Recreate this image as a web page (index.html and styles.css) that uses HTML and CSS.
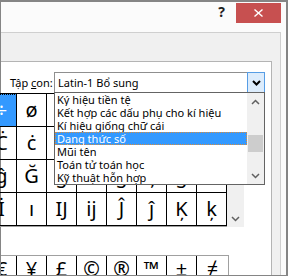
FILE: index.html
```html
<!DOCTYPE html>
<html>
<head>
    <link rel="stylesheet" href="styles.css">
</head>
<body>
    <div class="dialog">
        <div class="titlebar">
            <span class="help">?</span>
            <div class="close">
                <svg width="9" height="8" viewBox="0 0 9 8"><path d="M0.5 0.5 L8.5 7.5 M8.5 0.5 L0.5 7.5" stroke="#fff" stroke-width="1.4" fill="none"/></svg>
            </div>
        </div>
        <div class="tabpage">
            <div class="panel">
                <div class="subset-row">
                    <span class="label">Tập <u>c</u>on:</span>
                    <div class="combo">
                        <span class="combo-text">Latin-1 Bổ sung</span>
                        <span class="combo-btn">
                            <svg width="9" height="6" viewBox="0 0 9 6"><path d="M1 1 L4.5 4.5 L8 1" stroke="#000" stroke-width="2" fill="none"/></svg>
                        </span>
                        <div class="dropdown">
                            <ul class="items">
                                <li>Ký hiệu tiền tệ</li>
                                <li>Kết hợp các dấu phụ cho kí hiệu</li>
                                <li>Kí hiệu giống chữ cái</li>
                                <li class="active">Dạng thức số</li>
                                <li>Mũi tên</li>
                                <li>Toán tử toán học</li>
                                <li>Kỹ thuật hỗn hợp</li>
                            </ul>
                            <div class="list-scroll">
                                <span class="arrow"><svg width="9" height="6" viewBox="0 0 9 6"><path d="M1 5 L4.5 1.5 L8 5" stroke="#606060" stroke-width="1.5" fill="none"/></svg></span>
                                <span class="track"><span class="thumb"></span></span>
                                <span class="arrow"><svg width="9" height="6" viewBox="0 0 9 6"><path d="M1 1 L4.5 4.5 L8 1" stroke="#606060" stroke-width="1.5" fill="none"/></svg></span>
                            </div>
                        </div>
                    </div>
                </div>
                <div class="grid-wrap">
                    <div class="grid">
                        <span class="cell selected">÷</span><span class="cell">ø</span><span class="cell">ù</span><span class="cell">ú</span><span class="cell">û</span><span class="cell">ü</span><span class="cell">ý</span><span class="cell">þ</span>
                        <span class="cell">Ċ</span><span class="cell">ċ</span><span class="cell">Č</span><span class="cell">č</span><span class="cell">Ď</span><span class="cell">ď</span><span class="cell">Đ</span><span class="cell">đ</span>
                        <span class="cell">ĝ</span><span class="cell">Ğ</span><span class="cell">ğ</span><span class="cell">Ġ</span><span class="cell">ġ</span><span class="cell">Ģ</span><span class="cell">ģ</span><span class="cell">Ĥ</span>
                        <span class="cell">İ</span><span class="cell">ı</span><span class="cell">Ĳ</span><span class="cell">ĳ</span><span class="cell">Ĵ</span><span class="cell">ĵ</span><span class="cell">Ķ</span><span class="cell">ķ</span>
                    </div>
                    <div class="grid-scroll">
                        <span class="arrow"><svg width="9" height="6" viewBox="0 0 9 6"><path d="M1 1 L4.5 4.5 L8 1" stroke="#606060" stroke-width="1.5" fill="none"/></svg></span>
                    </div>
                </div>
                <div class="recent">
                    <span class="cell">€</span><span class="cell">¥</span><span class="cell">£</span><span class="cell">©</span><span class="cell">®</span><span class="cell">™</span><span class="cell">±</span><span class="cell">≠</span>
                </div>
            </div>
        </div>
    </div>
</body>
</html>
```

FILE: styles.css
```css
body {
    margin: 0;
    font-family: "Noto Sans", "Open Sans", sans-serif;
    font-size: 11px;
    color: #000;
}
.dialog {
    position: relative;
    width: 288px;
    height: 276px;
    overflow: hidden;
    background: #fbfbfb;
}
/* window frame, painted over everything except the symbol grid */
.dialog::after {
    content: "";
    position: absolute;
    inset: 0;
    border-style: solid;
    border-color: #858585;
    border-width: 2px 2px 1px 1px;
    z-index: 2;
    pointer-events: none;
}
.titlebar {
    height: 32px;
    display: flex;
    justify-content: flex-end;
    align-items: flex-start;
    gap: 11px;
    padding-right: 7px;
}
.help {
    margin-top: 4px;
    font-size: 14px;
    line-height: 16px;
    font-weight: 700;
    color: #1e1e1e;
}
.close {
    margin-top: 3px;
    width: 45px;
    height: 20px;
    background: #c75050;
    display: flex;
    align-items: center;
    justify-content: center;
}
.tabpage {
    width: 280px;
    height: 243px;
    border-top: 1px solid #cfcfcf;
    border-right: 1px solid #cfcfcf;
    background: #f0f0f0;
    padding-top: 28px;
    box-sizing: content-box;
}
.panel {
    width: 271px;
    height: 214px;
    border-top: 1px solid #b4b4b4;
    border-right: 1px solid #b4b4b4;
    background: #fff;
    padding-top: 10px;
}
.subset-row {
    display: flex;
    align-items: center;
    height: 21px;
}
.label {
    width: 44px;
    margin-left: 10px;
    white-space: nowrap;
}
.combo {
    position: relative;
    z-index: 4;
    width: 209px;
    height: 19px;
    border: 1px solid #8f8f8f;
    display: flex;
    align-items: center;
}
.combo-text {
    flex: 1;
    padding-left: 3px;
    white-space: nowrap;
}
.combo-btn {
    align-self: stretch;
    width: 16px;
    margin: -1px -1px -1px 0;
    border: 1px solid #569de5;
    background: #dcecfc;
    display: flex;
    align-items: center;
    justify-content: center;
}
.dropdown {
    position: absolute;
    top: 19px;
    left: -1px;
    width: 209px;
    height: 91px;
    border: 1px solid #646464;
    background: #fff;
    display: flex;
}
.items {
    list-style: none;
    margin: 0;
    padding: 0;
    width: 192px;
    overflow: hidden;
}
.items li {
    height: 13px;
    line-height: 13px;
    padding-left: 2px;
    white-space: nowrap;
    overflow: hidden;
}
.items li.active {
    background: #3399ff;
    color: #fff;
    outline: 1px dotted #d98c3c;
    outline-offset: -1px;
}
.list-scroll {
    width: 17px;
    background: #f0f0f0;
    display: flex;
    flex-direction: column;
}
.arrow {
    height: 17px;
    display: flex;
    align-items: center;
    justify-content: center;
}
.track {
    flex: 1;
    padding-top: 25px;
}
.thumb {
    display: block;
    width: 15px;
    height: 17px;
    margin-left: 1px;
    background: #cdcdcd;
}
.grid-wrap {
    position: relative;
    z-index: 3;
    display: flex;
    margin-left: -13px;
}
.grid {
    display: grid;
    grid-template-columns: repeat(8, 30px);
    grid-auto-rows: 33px;
    border-top: 1px solid #000;
    border-bottom: 1px solid #a0a0a0;
}
.cell {
    box-sizing: border-box;
    border-right: 1px solid #000;
    border-bottom: 1px solid #000;
    text-align: center;
    font-size: 20px;
    line-height: 31px;
}
.cell.selected {
    background: #3399ff;
    color: #fff;
    outline: 1px dotted #000;
    outline-offset: -1px;
}
.grid-scroll {
    width: 17px;
    background: #f0f0f0;
    display: flex;
    flex-direction: column;
    justify-content: flex-end;
}
.recent {
    display: flex;
    margin-top: 28px;
    margin-left: -13px;
    width: 241px;
    height: 40px;
    border-top: 1px solid #a0a0a0;
    border-right: 1px solid #a0a0a0;
}
.recent .cell {
    width: 30px;
    border-bottom: none;
    line-height: 26px;
}
.recent .cell:last-child {
    width: 31px;
    border-right: none;
}
```
